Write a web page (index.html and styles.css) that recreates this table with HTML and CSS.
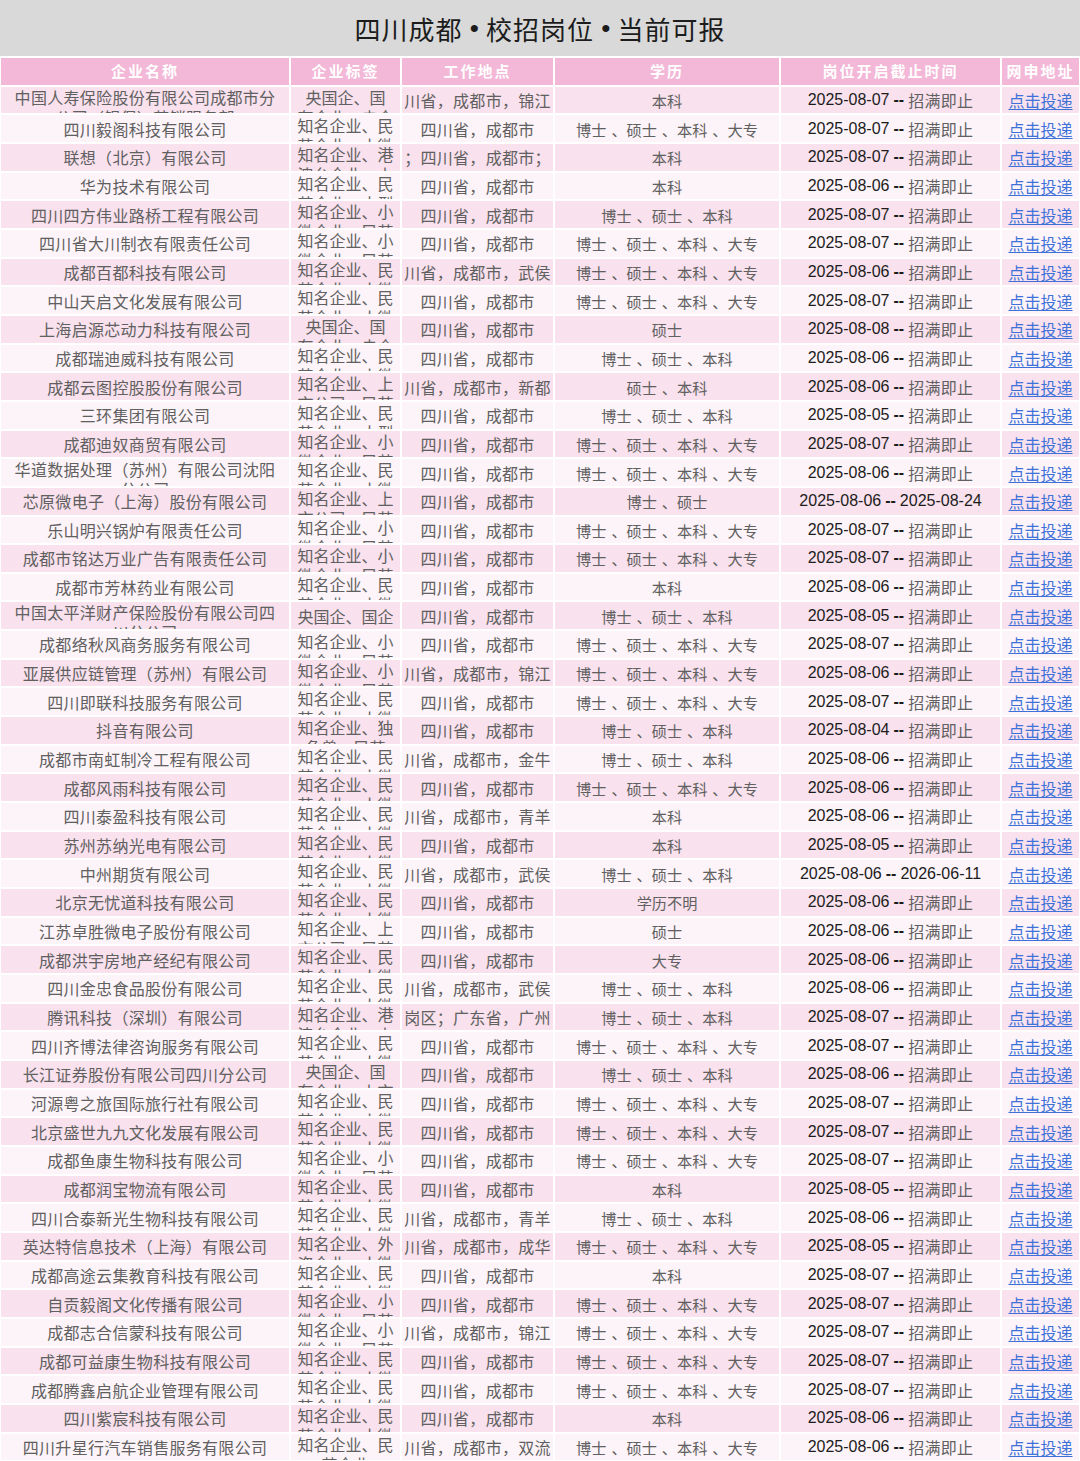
FILE: index.html
```html
<!DOCTYPE html>
<html lang="zh-CN">
<head>
<meta charset="utf-8">
<title>四川成都 • 校招岗位 • 当前可报</title>
<link rel="stylesheet" href="styles.css">
</head>
<body>
<div class="page">
  <div class="title">四川成都<span class="dot"> • </span>校招岗位<span class="dot"> • </span>当前可报</div>
  <div class="table">
    <div class="row head">
      <div class="c">企业名称</div>
      <div class="c">企业标签</div>
      <div class="c">工作地点</div>
      <div class="c">学历</div>
      <div class="c">岗位开启截止时间</div>
      <div class="c">网申地址</div>
    </div>

    <div class="row odd">
      <div class="c name wrap">中国人寿保险股份有限公司成都市分<br>公司（银保）营销服务部</div>
      <div class="c tag wrap">央国企、国<br>有企业、央企</div>
      <div class="c loc">川省，成都市，锦江</div>
      <div class="c edu">本科</div>
      <div class="c date"><span class="d">2025-08-07</span> <b>--</b> <span class="z">招满即止</span></div>
      <div class="c link"><a href="#">点击投递</a></div>
    </div>
    <div class="row even">
      <div class="c name">四川毅阁科技有限公司</div>
      <div class="c tag wrap">知名企业、民<br>营企业、小微</div>
      <div class="c loc">四川省，成都市</div>
      <div class="c edu">博士 、硕士 、本科 、大专</div>
      <div class="c date"><span class="d">2025-08-07</span> <b>--</b> <span class="z">招满即止</span></div>
      <div class="c link"><a href="#">点击投递</a></div>
    </div>
    <div class="row odd">
      <div class="c name">联想（北京）有限公司</div>
      <div class="c tag wrap">知名企业、港<br>澳台企业、上</div>
      <div class="c loc">；四川省，成都市；</div>
      <div class="c edu">本科</div>
      <div class="c date"><span class="d">2025-08-07</span> <b>--</b> <span class="z">招满即止</span></div>
      <div class="c link"><a href="#">点击投递</a></div>
    </div>
    <div class="row even">
      <div class="c name">华为技术有限公司</div>
      <div class="c tag wrap">知名企业、民<br>营企业、大型</div>
      <div class="c loc">四川省，成都市</div>
      <div class="c edu">本科</div>
      <div class="c date"><span class="d">2025-08-06</span> <b>--</b> <span class="z">招满即止</span></div>
      <div class="c link"><a href="#">点击投递</a></div>
    </div>
    <div class="row odd">
      <div class="c name">四川四方伟业路桥工程有限公司</div>
      <div class="c tag wrap">知名企业、小<br>微企业、民营</div>
      <div class="c loc">四川省，成都市</div>
      <div class="c edu">博士 、硕士 、本科</div>
      <div class="c date"><span class="d">2025-08-07</span> <b>--</b> <span class="z">招满即止</span></div>
      <div class="c link"><a href="#">点击投递</a></div>
    </div>
    <div class="row even">
      <div class="c name">四川省大川制衣有限责任公司</div>
      <div class="c tag wrap">知名企业、小<br>微企业、民营</div>
      <div class="c loc">四川省，成都市</div>
      <div class="c edu">博士 、硕士 、本科 、大专</div>
      <div class="c date"><span class="d">2025-08-07</span> <b>--</b> <span class="z">招满即止</span></div>
      <div class="c link"><a href="#">点击投递</a></div>
    </div>
    <div class="row odd">
      <div class="c name">成都百都科技有限公司</div>
      <div class="c tag wrap">知名企业、民<br>营企业、小微</div>
      <div class="c loc">川省，成都市，武侯</div>
      <div class="c edu">博士 、硕士 、本科 、大专</div>
      <div class="c date"><span class="d">2025-08-06</span> <b>--</b> <span class="z">招满即止</span></div>
      <div class="c link"><a href="#">点击投递</a></div>
    </div>
    <div class="row even">
      <div class="c name">中山天启文化发展有限公司</div>
      <div class="c tag wrap">知名企业、民<br>营企业、小微</div>
      <div class="c loc">四川省，成都市</div>
      <div class="c edu">博士 、硕士 、本科 、大专</div>
      <div class="c date"><span class="d">2025-08-07</span> <b>--</b> <span class="z">招满即止</span></div>
      <div class="c link"><a href="#">点击投递</a></div>
    </div>
    <div class="row odd">
      <div class="c name">上海启源芯动力科技有限公司</div>
      <div class="c tag wrap">央国企、国<br>有企业、央企</div>
      <div class="c loc">四川省，成都市</div>
      <div class="c edu">硕士</div>
      <div class="c date"><span class="d">2025-08-08</span> <b>--</b> <span class="z">招满即止</span></div>
      <div class="c link"><a href="#">点击投递</a></div>
    </div>
    <div class="row even">
      <div class="c name">成都瑞迪威科技有限公司</div>
      <div class="c tag wrap">知名企业、民<br>营企业、小微</div>
      <div class="c loc">四川省，成都市</div>
      <div class="c edu">博士 、硕士 、本科</div>
      <div class="c date"><span class="d">2025-08-06</span> <b>--</b> <span class="z">招满即止</span></div>
      <div class="c link"><a href="#">点击投递</a></div>
    </div>
    <div class="row odd">
      <div class="c name">成都云图控股股份有限公司</div>
      <div class="c tag wrap">知名企业、上<br>市公司、民营</div>
      <div class="c loc">川省，成都市，新都</div>
      <div class="c edu">硕士 、本科</div>
      <div class="c date"><span class="d">2025-08-06</span> <b>--</b> <span class="z">招满即止</span></div>
      <div class="c link"><a href="#">点击投递</a></div>
    </div>
    <div class="row even">
      <div class="c name">三环集团有限公司</div>
      <div class="c tag wrap">知名企业、民<br>营企业、大型</div>
      <div class="c loc">四川省，成都市</div>
      <div class="c edu">博士 、硕士 、本科</div>
      <div class="c date"><span class="d">2025-08-05</span> <b>--</b> <span class="z">招满即止</span></div>
      <div class="c link"><a href="#">点击投递</a></div>
    </div>
    <div class="row odd">
      <div class="c name">成都迪奴商贸有限公司</div>
      <div class="c tag wrap">知名企业、小<br>微企业、民营</div>
      <div class="c loc">四川省，成都市</div>
      <div class="c edu">博士 、硕士 、本科 、大专</div>
      <div class="c date"><span class="d">2025-08-07</span> <b>--</b> <span class="z">招满即止</span></div>
      <div class="c link"><a href="#">点击投递</a></div>
    </div>
    <div class="row even">
      <div class="c name wrap">华道数据处理（苏州）有限公司沈阳<br>分公司</div>
      <div class="c tag wrap">知名企业、民<br>营企业、小微</div>
      <div class="c loc">四川省，成都市</div>
      <div class="c edu">博士 、硕士 、本科 、大专</div>
      <div class="c date"><span class="d">2025-08-06</span> <b>--</b> <span class="z">招满即止</span></div>
      <div class="c link"><a href="#">点击投递</a></div>
    </div>
    <div class="row odd">
      <div class="c name">芯原微电子（上海）股份有限公司</div>
      <div class="c tag wrap">知名企业、上<br>市公司、民营</div>
      <div class="c loc">四川省，成都市</div>
      <div class="c edu">博士 、硕士</div>
      <div class="c date"><span class="d">2025-08-06</span> <b>--</b> <span class="d">2025-08-24</span></div>
      <div class="c link"><a href="#">点击投递</a></div>
    </div>
    <div class="row even">
      <div class="c name">乐山明兴锅炉有限责任公司</div>
      <div class="c tag wrap">知名企业、小<br>微企业、民营</div>
      <div class="c loc">四川省，成都市</div>
      <div class="c edu">博士 、硕士 、本科 、大专</div>
      <div class="c date"><span class="d">2025-08-07</span> <b>--</b> <span class="z">招满即止</span></div>
      <div class="c link"><a href="#">点击投递</a></div>
    </div>
    <div class="row odd">
      <div class="c name">成都市铭达万业广告有限责任公司</div>
      <div class="c tag wrap">知名企业、小<br>微企业、民营</div>
      <div class="c loc">四川省，成都市</div>
      <div class="c edu">博士 、硕士 、本科 、大专</div>
      <div class="c date"><span class="d">2025-08-07</span> <b>--</b> <span class="z">招满即止</span></div>
      <div class="c link"><a href="#">点击投递</a></div>
    </div>
    <div class="row even">
      <div class="c name">成都市芳林药业有限公司</div>
      <div class="c tag wrap">知名企业、民<br>营企业、小微</div>
      <div class="c loc">四川省，成都市</div>
      <div class="c edu">本科</div>
      <div class="c date"><span class="d">2025-08-06</span> <b>--</b> <span class="z">招满即止</span></div>
      <div class="c link"><a href="#">点击投递</a></div>
    </div>
    <div class="row odd">
      <div class="c name wrap">中国太平洋财产保险股份有限公司四<br>川分公司</div>
      <div class="c tag">央国企、国企</div>
      <div class="c loc">四川省，成都市</div>
      <div class="c edu">博士 、硕士 、本科</div>
      <div class="c date"><span class="d">2025-08-05</span> <b>--</b> <span class="z">招满即止</span></div>
      <div class="c link"><a href="#">点击投递</a></div>
    </div>
    <div class="row even">
      <div class="c name">成都络秋风商务服务有限公司</div>
      <div class="c tag wrap">知名企业、小<br>微企业、民营</div>
      <div class="c loc">四川省，成都市</div>
      <div class="c edu">博士 、硕士 、本科 、大专</div>
      <div class="c date"><span class="d">2025-08-07</span> <b>--</b> <span class="z">招满即止</span></div>
      <div class="c link"><a href="#">点击投递</a></div>
    </div>
    <div class="row odd">
      <div class="c name">亚展供应链管理（苏州）有限公司</div>
      <div class="c tag wrap">知名企业、小<br>微企业、民营</div>
      <div class="c loc">川省，成都市，锦江</div>
      <div class="c edu">博士 、硕士 、本科 、大专</div>
      <div class="c date"><span class="d">2025-08-06</span> <b>--</b> <span class="z">招满即止</span></div>
      <div class="c link"><a href="#">点击投递</a></div>
    </div>
    <div class="row even">
      <div class="c name">四川即联科技服务有限公司</div>
      <div class="c tag wrap">知名企业、民<br>营企业、小微</div>
      <div class="c loc">四川省，成都市</div>
      <div class="c edu">博士 、硕士 、本科 、大专</div>
      <div class="c date"><span class="d">2025-08-07</span> <b>--</b> <span class="z">招满即止</span></div>
      <div class="c link"><a href="#">点击投递</a></div>
    </div>
    <div class="row odd">
      <div class="c name">抖音有限公司</div>
      <div class="c tag wrap">知名企业、独<br>角兽、民营</div>
      <div class="c loc">四川省，成都市</div>
      <div class="c edu">博士 、硕士 、本科</div>
      <div class="c date"><span class="d">2025-08-04</span> <b>--</b> <span class="z">招满即止</span></div>
      <div class="c link"><a href="#">点击投递</a></div>
    </div>
    <div class="row even">
      <div class="c name">成都市南虹制冷工程有限公司</div>
      <div class="c tag wrap">知名企业、民<br>营企业、小微</div>
      <div class="c loc">川省，成都市，金牛</div>
      <div class="c edu">博士 、硕士 、本科</div>
      <div class="c date"><span class="d">2025-08-06</span> <b>--</b> <span class="z">招满即止</span></div>
      <div class="c link"><a href="#">点击投递</a></div>
    </div>
    <div class="row odd">
      <div class="c name">成都风雨科技有限公司</div>
      <div class="c tag wrap">知名企业、民<br>营企业、小微</div>
      <div class="c loc">四川省，成都市</div>
      <div class="c edu">博士 、硕士 、本科 、大专</div>
      <div class="c date"><span class="d">2025-08-06</span> <b>--</b> <span class="z">招满即止</span></div>
      <div class="c link"><a href="#">点击投递</a></div>
    </div>
    <div class="row even">
      <div class="c name">四川泰盈科技有限公司</div>
      <div class="c tag wrap">知名企业、民<br>营企业、小微</div>
      <div class="c loc">川省，成都市，青羊</div>
      <div class="c edu">本科</div>
      <div class="c date"><span class="d">2025-08-06</span> <b>--</b> <span class="z">招满即止</span></div>
      <div class="c link"><a href="#">点击投递</a></div>
    </div>
    <div class="row odd">
      <div class="c name">苏州苏纳光电有限公司</div>
      <div class="c tag wrap">知名企业、民<br>营企业、小微</div>
      <div class="c loc">四川省，成都市</div>
      <div class="c edu">本科</div>
      <div class="c date"><span class="d">2025-08-05</span> <b>--</b> <span class="z">招满即止</span></div>
      <div class="c link"><a href="#">点击投递</a></div>
    </div>
    <div class="row even">
      <div class="c name">中州期货有限公司</div>
      <div class="c tag wrap">知名企业、民<br>营企业、小微</div>
      <div class="c loc">川省，成都市，武侯</div>
      <div class="c edu">博士 、硕士 、本科</div>
      <div class="c date"><span class="d">2025-08-06</span> <b>--</b> <span class="d">2026-06-11</span></div>
      <div class="c link"><a href="#">点击投递</a></div>
    </div>
    <div class="row odd">
      <div class="c name">北京无忧道科技有限公司</div>
      <div class="c tag wrap">知名企业、民<br>营企业、小微</div>
      <div class="c loc">四川省，成都市</div>
      <div class="c edu">学历不明</div>
      <div class="c date"><span class="d">2025-08-06</span> <b>--</b> <span class="z">招满即止</span></div>
      <div class="c link"><a href="#">点击投递</a></div>
    </div>
    <div class="row even">
      <div class="c name">江苏卓胜微电子股份有限公司</div>
      <div class="c tag wrap">知名企业、上<br>市公司、民营</div>
      <div class="c loc">四川省，成都市</div>
      <div class="c edu">硕士</div>
      <div class="c date"><span class="d">2025-08-06</span> <b>--</b> <span class="z">招满即止</span></div>
      <div class="c link"><a href="#">点击投递</a></div>
    </div>
    <div class="row odd">
      <div class="c name">成都洪宇房地产经纪有限公司</div>
      <div class="c tag wrap">知名企业、民<br>营企业、小微</div>
      <div class="c loc">四川省，成都市</div>
      <div class="c edu">大专</div>
      <div class="c date"><span class="d">2025-08-06</span> <b>--</b> <span class="z">招满即止</span></div>
      <div class="c link"><a href="#">点击投递</a></div>
    </div>
    <div class="row even">
      <div class="c name">四川金忠食品股份有限公司</div>
      <div class="c tag wrap">知名企业、民<br>营企业、小微</div>
      <div class="c loc">川省，成都市，武侯</div>
      <div class="c edu">博士 、硕士 、本科</div>
      <div class="c date"><span class="d">2025-08-06</span> <b>--</b> <span class="z">招满即止</span></div>
      <div class="c link"><a href="#">点击投递</a></div>
    </div>
    <div class="row odd">
      <div class="c name">腾讯科技（深圳）有限公司</div>
      <div class="c tag wrap">知名企业、港<br>澳台企业、上</div>
      <div class="c loc">岗区；广东省，广州</div>
      <div class="c edu">博士 、硕士 、本科</div>
      <div class="c date"><span class="d">2025-08-07</span> <b>--</b> <span class="z">招满即止</span></div>
      <div class="c link"><a href="#">点击投递</a></div>
    </div>
    <div class="row even">
      <div class="c name">四川齐博法律咨询服务有限公司</div>
      <div class="c tag wrap">知名企业、民<br>营企业、小微</div>
      <div class="c loc">四川省，成都市</div>
      <div class="c edu">博士 、硕士 、本科 、大专</div>
      <div class="c date"><span class="d">2025-08-07</span> <b>--</b> <span class="z">招满即止</span></div>
      <div class="c link"><a href="#">点击投递</a></div>
    </div>
    <div class="row odd">
      <div class="c name">长江证券股份有限公司四川分公司</div>
      <div class="c tag wrap">央国企、国<br>有企业、上市</div>
      <div class="c loc">四川省，成都市</div>
      <div class="c edu">博士 、硕士 、本科</div>
      <div class="c date"><span class="d">2025-08-06</span> <b>--</b> <span class="z">招满即止</span></div>
      <div class="c link"><a href="#">点击投递</a></div>
    </div>
    <div class="row even">
      <div class="c name">河源粤之旅国际旅行社有限公司</div>
      <div class="c tag wrap">知名企业、民<br>营企业、小微</div>
      <div class="c loc">四川省，成都市</div>
      <div class="c edu">博士 、硕士 、本科 、大专</div>
      <div class="c date"><span class="d">2025-08-07</span> <b>--</b> <span class="z">招满即止</span></div>
      <div class="c link"><a href="#">点击投递</a></div>
    </div>
    <div class="row odd">
      <div class="c name">北京盛世九九文化发展有限公司</div>
      <div class="c tag wrap">知名企业、民<br>营企业、小微</div>
      <div class="c loc">四川省，成都市</div>
      <div class="c edu">博士 、硕士 、本科 、大专</div>
      <div class="c date"><span class="d">2025-08-07</span> <b>--</b> <span class="z">招满即止</span></div>
      <div class="c link"><a href="#">点击投递</a></div>
    </div>
    <div class="row even">
      <div class="c name">成都鱼康生物科技有限公司</div>
      <div class="c tag wrap">知名企业、小<br>微企业、民营</div>
      <div class="c loc">四川省，成都市</div>
      <div class="c edu">博士 、硕士 、本科 、大专</div>
      <div class="c date"><span class="d">2025-08-07</span> <b>--</b> <span class="z">招满即止</span></div>
      <div class="c link"><a href="#">点击投递</a></div>
    </div>
    <div class="row odd">
      <div class="c name">成都润宝物流有限公司</div>
      <div class="c tag wrap">知名企业、民<br>营企业、小微</div>
      <div class="c loc">四川省，成都市</div>
      <div class="c edu">本科</div>
      <div class="c date"><span class="d">2025-08-05</span> <b>--</b> <span class="z">招满即止</span></div>
      <div class="c link"><a href="#">点击投递</a></div>
    </div>
    <div class="row even">
      <div class="c name">四川合泰新光生物科技有限公司</div>
      <div class="c tag wrap">知名企业、民<br>营企业、小微</div>
      <div class="c loc">川省，成都市，青羊</div>
      <div class="c edu">博士 、硕士 、本科</div>
      <div class="c date"><span class="d">2025-08-06</span> <b>--</b> <span class="z">招满即止</span></div>
      <div class="c link"><a href="#">点击投递</a></div>
    </div>
    <div class="row odd">
      <div class="c name">英达特信息技术（上海）有限公司</div>
      <div class="c tag wrap">知名企业、外<br>资企业、小微</div>
      <div class="c loc">川省，成都市，成华</div>
      <div class="c edu">博士 、硕士 、本科 、大专</div>
      <div class="c date"><span class="d">2025-08-05</span> <b>--</b> <span class="z">招满即止</span></div>
      <div class="c link"><a href="#">点击投递</a></div>
    </div>
    <div class="row even">
      <div class="c name">成都高途云集教育科技有限公司</div>
      <div class="c tag wrap">知名企业、民<br>营企业、小微</div>
      <div class="c loc">四川省，成都市</div>
      <div class="c edu">本科</div>
      <div class="c date"><span class="d">2025-08-07</span> <b>--</b> <span class="z">招满即止</span></div>
      <div class="c link"><a href="#">点击投递</a></div>
    </div>
    <div class="row odd">
      <div class="c name">自贡毅阁文化传播有限公司</div>
      <div class="c tag wrap">知名企业、小<br>微企业、民营</div>
      <div class="c loc">四川省，成都市</div>
      <div class="c edu">博士 、硕士 、本科 、大专</div>
      <div class="c date"><span class="d">2025-08-07</span> <b>--</b> <span class="z">招满即止</span></div>
      <div class="c link"><a href="#">点击投递</a></div>
    </div>
    <div class="row even">
      <div class="c name">成都志合信蒙科技有限公司</div>
      <div class="c tag wrap">知名企业、小<br>微企业、民营</div>
      <div class="c loc">川省，成都市，锦江</div>
      <div class="c edu">博士 、硕士 、本科 、大专</div>
      <div class="c date"><span class="d">2025-08-07</span> <b>--</b> <span class="z">招满即止</span></div>
      <div class="c link"><a href="#">点击投递</a></div>
    </div>
    <div class="row odd">
      <div class="c name">成都可益康生物科技有限公司</div>
      <div class="c tag wrap">知名企业、民<br>营企业、小微</div>
      <div class="c loc">四川省，成都市</div>
      <div class="c edu">博士 、硕士 、本科 、大专</div>
      <div class="c date"><span class="d">2025-08-07</span> <b>--</b> <span class="z">招满即止</span></div>
      <div class="c link"><a href="#">点击投递</a></div>
    </div>
    <div class="row even">
      <div class="c name">成都腾鑫启航企业管理有限公司</div>
      <div class="c tag wrap">知名企业、民<br>营企业、小微</div>
      <div class="c loc">四川省，成都市</div>
      <div class="c edu">博士 、硕士 、本科 、大专</div>
      <div class="c date"><span class="d">2025-08-07</span> <b>--</b> <span class="z">招满即止</span></div>
      <div class="c link"><a href="#">点击投递</a></div>
    </div>
    <div class="row odd">
      <div class="c name">四川紫宸科技有限公司</div>
      <div class="c tag wrap">知名企业、民<br>营企业、小微</div>
      <div class="c loc">四川省，成都市</div>
      <div class="c edu">本科</div>
      <div class="c date"><span class="d">2025-08-06</span> <b>--</b> <span class="z">招满即止</span></div>
      <div class="c link"><a href="#">点击投递</a></div>
    </div>
    <div class="row even">
      <div class="c name">四川升星行汽车销售服务有限公司</div>
      <div class="c tag wrap">知名企业、民<br>营企业</div>
      <div class="c loc">川省，成都市，双流</div>
      <div class="c edu">博士 、硕士 、本科 、大专</div>
      <div class="c date"><span class="d">2025-08-06</span> <b>--</b> <span class="z">招满即止</span></div>
      <div class="c link"><a href="#">点击投递</a></div>
    </div>
  </div>
</div>
</body>
</html>
```

FILE: styles.css
```css
html, body {
  margin: 0;
  padding: 0;
  background: #ffffff;
}

.page {
  width: 1080px;
  font-family: "Noto Sans CJK SC", "Noto Sans", sans-serif;
  color: #606060;
}

.title {
  height: 56px;
  background: #d9d9d9;
  display: flex;
  align-items: center;
  justify-content: center;
  font-size: 26px;
  letter-spacing: 1px;
  color: #1c1c1c;
  padding-top: 1px;
  box-sizing: border-box;
  white-space: pre;
}

.title .dot {
  font-family: "Liberation Sans", Arial, sans-serif;
  letter-spacing: 0;
}

.table {
  display: grid;
  row-gap: 2px;
  padding-top: 2px;
  background: #ffffff;
}

.row {
  display: grid;
  grid-template-columns: 288px 109px 151px 224px 219px 77px;
  column-gap: 2px;
  height: 26.66px;
  padding-left: 1px;
}

.c {
  display: flex;
  align-items: center;
  justify-content: center;
  overflow: hidden;
  white-space: nowrap;
  text-align: center;
  font-size: 16px;
  line-height: 20px;
  letter-spacing: 0.3px;
}

.c.wrap {
  align-items: flex-start;
}

.head .c {
  background: #f3b7d7;
  color: #ffffff;
  font-size: 15px;
  letter-spacing: 2px;
  font-weight: 700;
}

.odd .c {
  background: #f9e1ed;
}

.even .c {
  background: #fdf4f9;
}

.tag {
  letter-spacing: 0;
}

.edu {
  font-size: 15.2px;
  letter-spacing: 0;
  word-spacing: 1.5px;
}

.date {
  color: #606060;
}

.date .d {
  font-family: "Liberation Sans", Arial, sans-serif;
  color: #1c1c1c;
  letter-spacing: 0;
}

.date b {
  font-family: "Liberation Sans", Arial, sans-serif;
  color: #1c1c1c;
  margin: 0 4px;
  letter-spacing: 0;
}

.link a {
  color: #3f72d8;
  text-decoration: underline;
  text-underline-offset: 2px;
  letter-spacing: 0;
}
```
